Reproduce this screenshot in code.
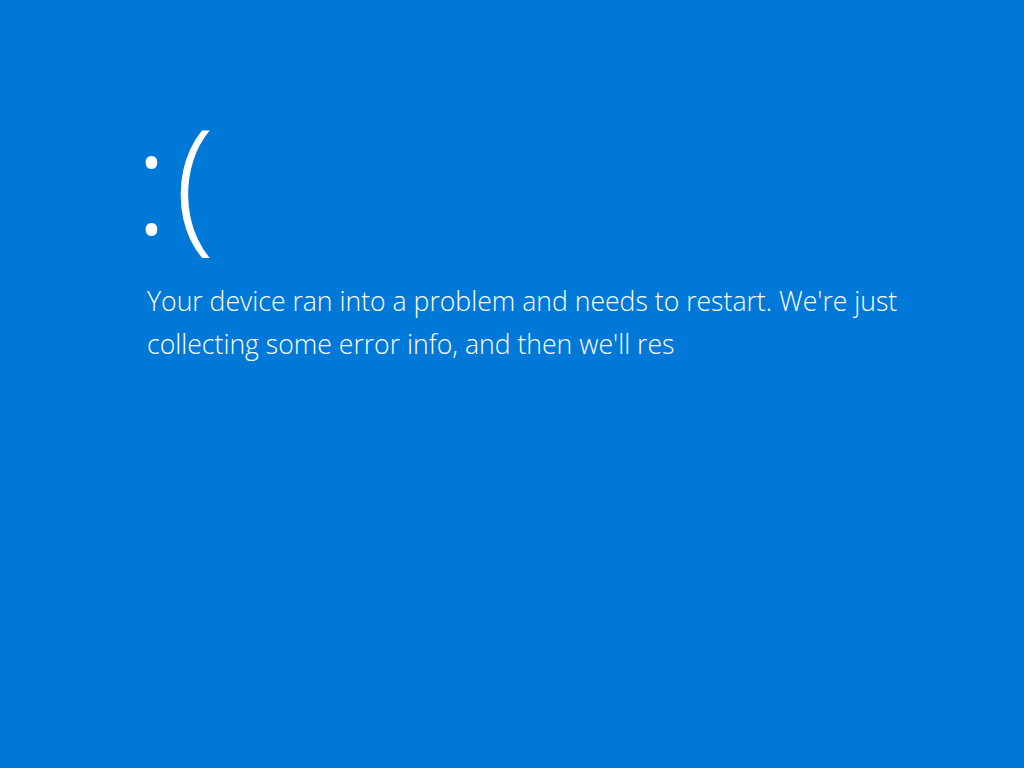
export default function App() {
  return (
    <div
      className="w-[1024px] h-[768px] bg-[#0078d7] text-white overflow-hidden"
      style={{ fontFamily: '"Open Sans", "Noto Sans", sans-serif' }}
    >
      <div className="pl-[134px] pt-[89px]">
        <div className="text-[146px] leading-[180px] font-light tracking-[6px]">:(</div>
        <div className="mt-[11px] pl-[13px] text-[26.6px] leading-[43px] font-light">
          <p>Your device ran into a problem and needs to restart. We're just</p>
          <p>collecting some error info, and then we'll res</p>
        </div>
      </div>
    </div>
  );
}
